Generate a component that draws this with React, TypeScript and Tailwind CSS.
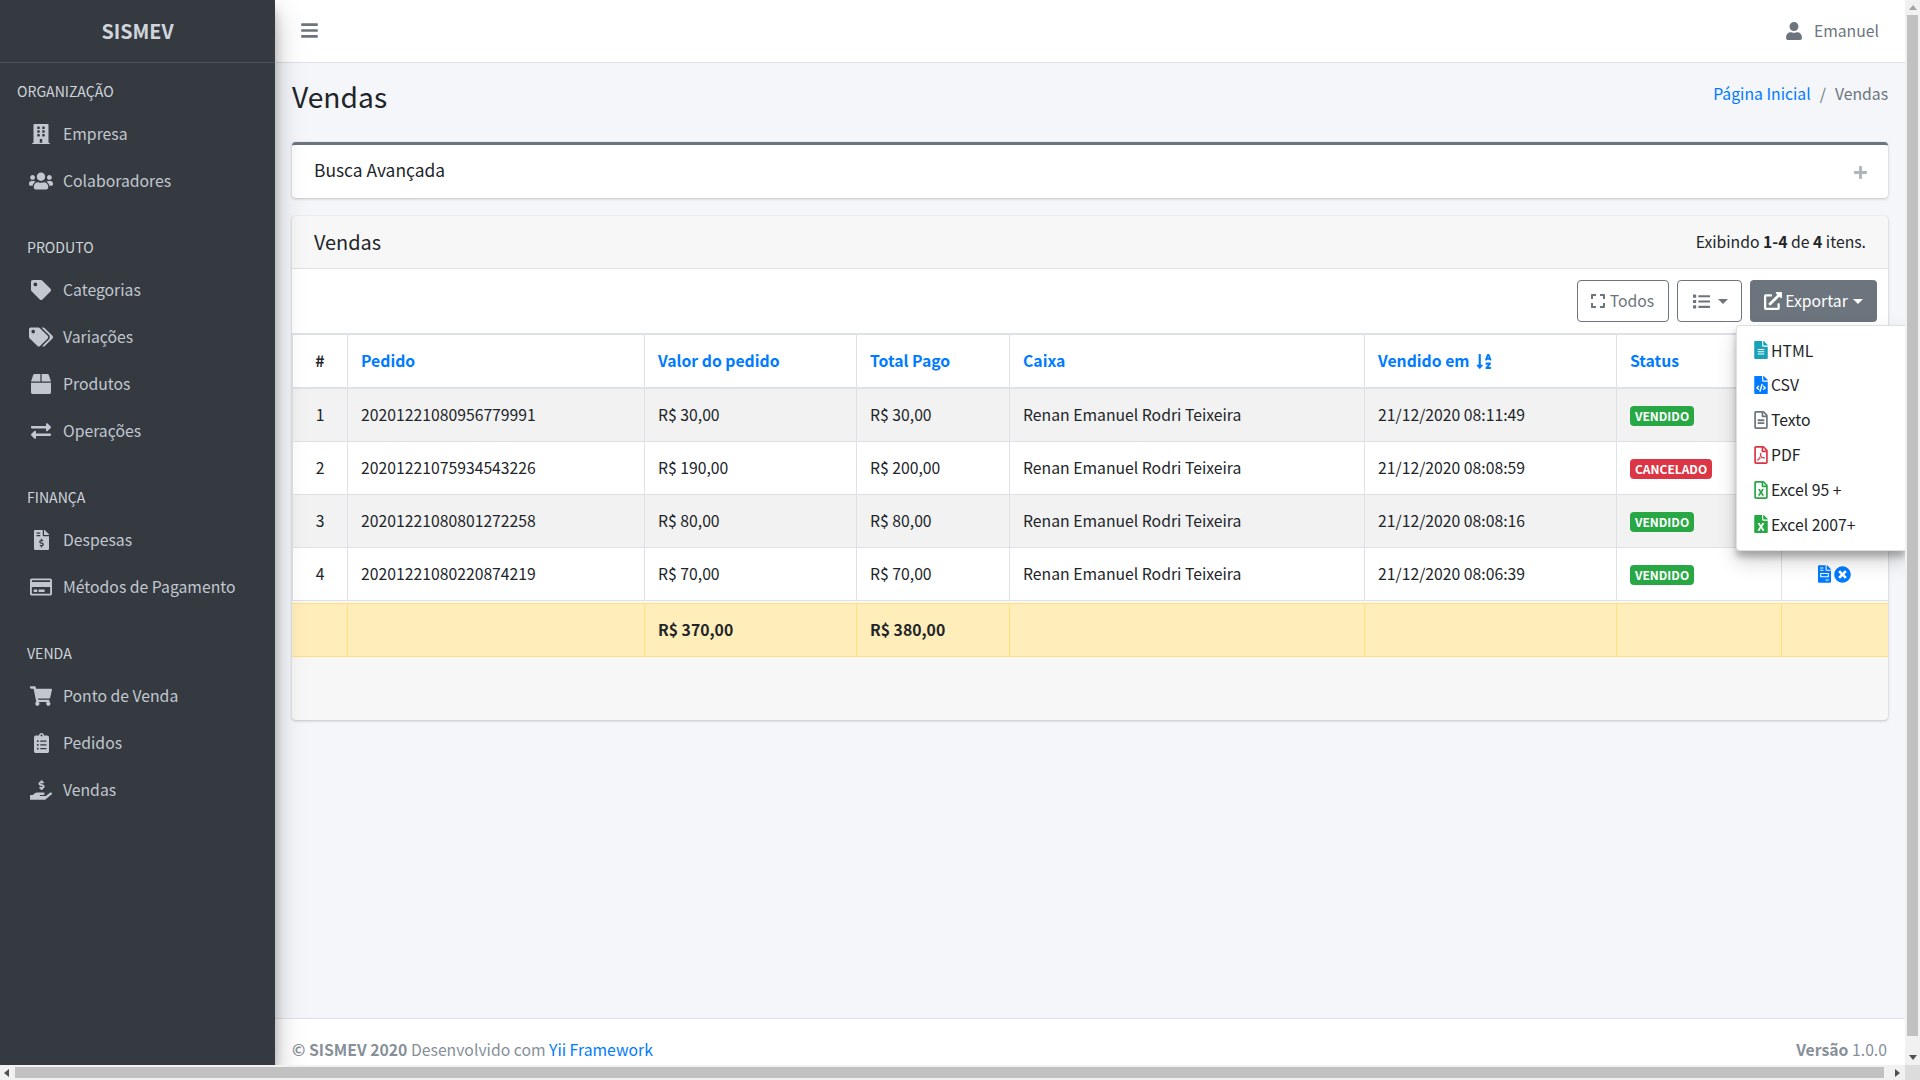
import {
	FaBars,
	FaBox,
	FaBuilding,
	FaClipboardList,
	FaExchangeAlt,
	FaExpand,
	FaExternalLinkAlt,
	FaFileAlt,
	FaFileCode,
	FaFileExcel,
	FaFileInvoice,
	FaFileInvoiceDollar,
	FaHandHoldingUsd,
	FaList,
	FaPlus,
	FaRegCreditCard,
	FaRegFileAlt,
	FaRegFileExcel,
	FaRegFilePdf,
	FaShoppingCart,
	FaSortAlphaDown,
	FaTag,
	FaTags,
	FaTimesCircle,
	FaUser,
	FaUsers,
} from "react-icons/fa";
import type { ReactNode } from "react";

const font = "font-['Noto_Sans_CJK_SC','Noto_Sans',sans-serif]";

interface NavGroup {
	title: string;
	titleClass: string;
	items: { icon: ReactNode; label: string }[];
}

const nav: NavGroup[] = [
	{
		title: "ORGANIZAÇÃO",
		titleClass: "pl-[17px]",
		items: [
			{ icon: <FaBuilding className="w-[18px] h-[20px]" />, label: "Empresa" },
			{ icon: <FaUsers className="w-[24px] h-[20px]" />, label: "Colaboradores" },
		],
	},
	{
		title: "PRODUTO",
		titleClass: "pl-[27px]",
		items: [
			{ icon: <FaTag className="w-[20px] h-[20px]" />, label: "Categorias" },
			{ icon: <FaTags className="w-[24px] h-[20px]" />, label: "Variações" },
			{ icon: <FaBox className="w-[20px] h-[20px]" />, label: "Produtos" },
			{ icon: <FaExchangeAlt className="w-[20px] h-[20px]" />, label: "Operações" },
		],
	},
	{
		title: "FINANÇA",
		titleClass: "pl-[27px]",
		items: [
			{ icon: <FaFileInvoiceDollar className="w-[15px] h-[20px]" />, label: "Despesas" },
			{ icon: <FaRegCreditCard className="w-[22px] h-[20px]" />, label: "Métodos de Pagamento" },
		],
	},
	{
		title: "VENDA",
		titleClass: "pl-[27px]",
		items: [
			{ icon: <FaShoppingCart className="w-[22px] h-[20px]" />, label: "Ponto de Venda" },
			{ icon: <FaClipboardList className="w-[15px] h-[20px]" />, label: "Pedidos" },
			{ icon: <FaHandHoldingUsd className="w-[22px] h-[20px]" />, label: "Vendas" },
		],
	},
];

const rows = [
	{ n: 1, pedido: "20201221080956779991", valor: "R$ 30,00", pago: "R$ 30,00", data: "21/12/2020 08:11:49", ok: true },
	{ n: 2, pedido: "20201221075934543226", valor: "R$ 190,00", pago: "R$ 200,00", data: "21/12/2020 08:08:59", ok: false },
	{ n: 3, pedido: "20201221080801272258", valor: "R$ 80,00", pago: "R$ 80,00", data: "21/12/2020 08:08:16", ok: true },
	{ n: 4, pedido: "20201221080220874219", valor: "R$ 70,00", pago: "R$ 70,00", data: "21/12/2020 08:06:39", ok: true },
];

const exportItems = [
	{ icon: <FaFileAlt className="text-[#17a2b8]" />, label: "HTML" },
	{ icon: <FaFileCode className="text-[#007bff]" />, label: "CSV" },
	{ icon: <FaRegFileAlt className="text-[#6c757d]" />, label: "Texto" },
	{ icon: <FaRegFilePdf className="text-[#dc3545]" />, label: "PDF" },
	{ icon: <FaRegFileExcel className="text-[#28a745]" />, label: "Excel 95 +" },
	{ icon: <FaFileExcel className="text-[#28a745]" />, label: "Excel 2007+" },
];

const Sidebar = () => (
	<aside className="w-[275px] shrink-0 bg-[#343a40] z-10 shadow-[0_14px_28px_rgba(0,0,0,0.25),0_10px_10px_rgba(0,0,0,0.22)]">
		<div className="h-[63px] border-b border-[#4b545c] flex items-center justify-center text-[19.7px] font-bold text-[#d0d4db]">
			SISMEV
		</div>
		<nav className="pt-[15px]">
			{nav.map((group) => (
				<div key={group.title} className="mb-[30px]">
					<div className={`${group.titleClass} h-[26px] leading-[26px] text-[14.1px] text-[#d0d4db]`}>{group.title}</div>
					<ul className="mt-[6px]">
						{group.items.map((item) => (
							<li key={item.label} className="h-[47px] flex items-center text-[#c2c7d0] text-[15.75px]">
								<span className="w-[63px] pl-[29px] pr-[10px] shrink-0 flex justify-center">{item.icon}</span>
								{item.label}
							</li>
						))}
					</ul>
				</div>
			))}
		</nav>
	</aside>
);

const Badge = ({ ok }: { ok: boolean }) => (
	<span
		className={`inline-block mt-[2px] h-[20px] leading-[20px] px-[5px] rounded-[4px] text-[12px] font-bold text-white ${ok ? "bg-[#28a745]" : "bg-[#dc3545]"}`}
	>
		{ok ? "VENDIDO" : "CANCELADO"}
	</span>
);

const cols = "grid grid-cols-[55px_297px_212px_153px_355px_252px_165px_106px]";
const cell = "border-l border-[#dee2e6] px-[13px] flex items-center";

const VendasTable = () => (
	<div className="text-[#212529] text-[15.75px]">
		<div className={`${cols} h-[56px] border-t-[2px] border-b-[2px] border-[#dee2e6] bg-white font-bold text-[#007bff]`}>
			<div className={`${cell} justify-center text-[#212529]`}>#</div>
			<div className={cell}>Pedido</div>
			<div className={cell}>Valor do pedido</div>
			<div className={cell}>Total Pago</div>
			<div className={cell}>Caixa</div>
			<div className={`${cell} gap-[6px]`}>
				Vendido em <FaSortAlphaDown className="w-[16px] h-[17px]" />
			</div>
			<div className={cell}>Status</div>
			<div className={cell} />
		</div>
		{rows.map((r) => (
			<div
				key={r.n}
				className={`${cols} h-[53px] border-b border-[#dee2e6] ${r.n % 2 === 1 ? "bg-[#f2f2f2]" : "bg-white"}`}
			>
				<div className={`${cell} justify-center`}>{r.n}</div>
				<div className={cell}>{r.pedido}</div>
				<div className={cell}>{r.valor}</div>
				<div className={cell}>{r.pago}</div>
				<div className={cell}>Renan Emanuel Rodri Teixeira</div>
				<div className={cell}>{r.data}</div>
				<div className={cell}>
					<Badge ok={r.ok} />
				</div>
				<div className={`${cell} justify-center gap-[3px] text-[#007bff]`}>
					<FaFileInvoice className="w-[13px] h-[18px]" />
					<FaTimesCircle className="w-[17px] h-[17px]" />
				</div>
			</div>
		))}
		<div className={`${cols} h-[54px] mt-[2px] bg-[#ffeeba] border-t border-b border-[#ffdf7e] font-bold`}>
			<div className="px-[13px]" />
			<div className="border-l border-[#ffdf7e]" />
			<div className={`${cell} border-[#ffdf7e]`}>R$ 370,00</div>
			<div className={`${cell} border-[#ffdf7e]`}>R$ 380,00</div>
			<div className="border-l border-[#ffdf7e]" />
			<div className="border-l border-[#ffdf7e]" />
			<div className="border-l border-[#ffdf7e]" />
			<div className="border-l border-[#ffdf7e]" />
		</div>
	</div>
);

const ExportMenu = () => (
	<div className="absolute right-[15px] top-[325px] w-[169px] h-[226px] pt-[7px] pl-[17px] bg-white border border-[#0000001f] border-r-0 rounded-l-[4px] shadow-[0_10px_20px_rgba(0,0,0,0.19),0_6px_6px_rgba(0,0,0,0.23)] text-[15.75px] text-[#212529] z-20">
		{exportItems.map((item) => (
			<div key={item.label} className="h-[34.8px] flex items-center gap-[3px]">
				<span className="w-[14px] text-[18px] flex justify-center">{item.icon}</span>
				{item.label}
			</div>
		))}
	</div>
);

const ScrollBars = () => (
	<>
		<div className="absolute right-0 top-0 w-[15px] h-[1065px] bg-[#f1f1f1] z-30 flex flex-col items-center">
			<span className="mt-[5px] w-0 h-0 border-l-[4px] border-r-[4px] border-b-[5px] border-transparent border-b-[#a3a3a3]" />
			<div className="absolute left-[2px] top-[15px] w-[11px] h-[1021px] bg-[#c1c1c1]" />
			<span className="absolute bottom-[5px] w-0 h-0 border-l-[4px] border-r-[4px] border-t-[5px] border-transparent border-t-[#505050]" />
		</div>
		<div className="absolute left-0 bottom-0 w-full h-[15px] bg-[#f1f1f1] z-30 flex items-center">
			<span className="ml-[4px] w-0 h-0 border-t-[4px] border-b-[4px] border-r-[5px] border-transparent border-r-[#505050]" />
			<div className="absolute left-[15px] top-[2px] w-[1869px] h-[11px] bg-[#c1c1c1]" />
			<span className="absolute left-[1895px] w-0 h-0 border-t-[4px] border-b-[4px] border-l-[5px] border-transparent border-l-[#505050]" />
			<div className="absolute right-0 top-0 w-[15px] h-[15px] bg-[#dcdcdc]" />
		</div>
	</>
);

const App = () => {
	return (
		<div className={`${font} relative w-[1920px] h-[1080px] overflow-hidden bg-[#f4f6f9]`}>
			<div className="flex h-[1065px] pr-[15px]">
				<Sidebar />
				<div className="flex-1 min-w-0 flex flex-col">
					<header className="h-[63px] shrink-0 bg-white border-b border-[#dee2e6] flex items-center justify-between pl-[26px] pr-[26px] text-[#6c757d]">
						<FaBars className="w-[17px] h-[19px] -mt-[1px]" />
						<div className="flex items-center gap-[12px] text-[15.75px]">
							<FaUser className="w-[16px] h-[18px]" />
							<span>Emanuel</span>
						</div>
					</header>

					<main className="flex-1 px-[17px]">
						<div className="h-[79px] pb-[12px] flex items-center justify-between">
							<h1 className="text-[28.2px] text-[#212529]">Vendas</h1>
							<div className="text-[15.75px] text-[#6c757d] flex gap-[9px] -mt-[6px]">
								<span className="text-[#007bff]">Página Inicial</span>
								<span>/</span>
								<span>Vendas</span>
							</div>
						</div>

						<section className="h-[56px] pb-[3px] bg-white border-t-[3px] border-[#6c757d] rounded-[4px] shadow-[0_0_1px_rgba(0,0,0,0.125),0_1px_3px_rgba(0,0,0,0.2)] flex items-center justify-between pl-[22px] pr-[20px] text-[17.4px] text-[#212529]">
							<span>Busca Avançada</span>
							<FaPlus className="w-[15px] h-[15px] text-[#adb5bd] mt-[5px]" />
						</section>

						<section className="mt-[18px] h-[504px] bg-[#f7f7f7] rounded-[4px] shadow-[0_0_1px_rgba(0,0,0,0.125),0_1px_3px_rgba(0,0,0,0.2)] overflow-hidden">
							<div className="h-[53px] border-b border-[#dee2e6] flex items-center justify-between px-[22px] text-[#212529]">
								<span className="text-[19.9px]">Vendas</span>
								<span className="text-[15.75px]">
									Exibindo <b>1-4</b> de <b>4</b> itens.
								</span>
							</div>
							<div className="h-[64px] bg-white flex items-start justify-end gap-[8px] pt-[11px] pr-[11px] text-[15.75px]">
								<button className="h-[42px] w-[92px] pr-[2px] border border-[#6c757d] rounded-[4px] text-[#6c757d] flex items-center justify-center gap-[4px]">
									<FaExpand className="w-[16px] h-[16px]" /> Todos
								</button>
								<button className="h-[42px] w-[65px] border border-[#6c757d] rounded-[4px] text-[#6c757d] flex items-center justify-center gap-[7px]">
									<FaList className="w-[19px] h-[17px]" />
									<span className="w-0 h-0 border-l-[5px] border-r-[5px] border-t-[5px] border-transparent border-t-[#6c757d]" />
								</button>
								<button className="h-[42px] w-[127px] bg-[#6c757d] rounded-[4px] text-white flex items-center justify-center gap-[3px]">
									<FaExternalLinkAlt className="w-[18px] h-[18px]" /> Exportar
									<span className="ml-[2px] w-0 h-0 border-l-[5px] border-r-[5px] border-t-[5px] border-transparent border-t-white" />
								</button>
							</div>
							<VendasTable />
						</section>
					</main>

					<footer className="h-[47px] shrink-0 bg-white border-t border-[#dee2e6] flex items-start justify-between pt-[20px] pl-[17px] pr-[18px] text-[15.75px] leading-[22px] text-[#869099]">
						<div>
							<b>© SISMEV 2020</b> Desenvolvido com <span className="text-[#007bff]">Yii Framework</span>
						</div>
						<div>
							<b>Versão</b> 1.0.0
						</div>
					</footer>
				</div>
			</div>
			<ExportMenu />
			<ScrollBars />
		</div>
	);
};

export default App;
